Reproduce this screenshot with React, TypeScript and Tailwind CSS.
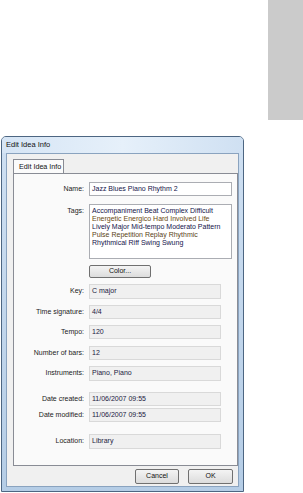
import React from "react";

const font = { fontFamily: '"Liberation Sans", Arial, sans-serif' };

function Row({ label, mt, children }: { label: string; mt: string; children: React.ReactNode }) {
  return (
    <div className={`flex items-start ${mt}`}>
      <div className="w-[71px] shrink-0 pr-[1px] text-right leading-[14px] text-[7px] text-[#1a1a1a]">{label}</div>
      <div className="ml-[4px] flex-1">{children}</div>
    </div>
  );
}

function RO({ value, mt, label, h = "h-[14px]" }: { value: string; mt: string; label: string; h?: string }) {
  return (
    <Row label={label} mt={mt}>
      <div className={`${h} w-[132px] border border-[#d9d9d9] bg-[#f0f0f0] pl-[2px] text-[7px] leading-[12px] text-[#1a1a40]`}>{value}</div>
    </Row>
  );
}

const btn =
  "flex items-center justify-center rounded-[2px] border border-[#707070] bg-gradient-to-b from-[#f4f4f4] to-[#dcdcdc] text-[7px] text-[#111]";

export default function App() {
  return (
    <div className="w-[303px] h-[493px] bg-white overflow-hidden" style={font}>
      <div className="flex justify-end">
        <div className="w-[35px] h-[120px] bg-[#cbcbcb]" />
      </div>
      <div className="mt-[16px] ml-[1px] w-[243px] h-[356px] rounded-t-[5px] border border-[#4d6682] bg-gradient-to-b from-[#cfe0f2] to-[#b5cde6] flex flex-col">
        <div className="h-[16px] shrink-0 bg-gradient-to-r from-[#d6e5f5] via-[#e6f0fa] to-[#cfe0f2] rounded-t-[4px] pl-[4px] text-[7.5px] leading-[16px] text-[#111]">
          Edit Idea Info
        </div>
        <div className="mx-[4px] mb-[4px] flex-1 border border-[#8aa3bf] bg-[#f0f0f0] pt-[5px] pl-[6px] pr-[0px] flex flex-col">
          <div className="flex">
            <div className="h-[14px] w-[51px] border border-b-0 border-[#898c95] bg-[#fbfbfb] pl-[5px] text-[7.2px] leading-[13px] text-[#111]">
              Edit Idea Info
            </div>
          </div>
          <div className="h-[293px] w-[225px] border border-[#898c95] bg-[#fafafa] flex flex-col">
            <Row label="Name:" mt="mt-[8px]">
              <div className="h-[14px] w-[143px] border border-[#abadb3] bg-white pl-[2px] text-[7px] leading-[12px] text-[#14144a]">
                Jazz Blues Piano Rhythm 2
              </div>
            </Row>
            <Row label="Tags:" mt="mt-[8px]">
              <div className="h-[55px] w-[143px] border border-[#abadb3] bg-white pl-[2px] pt-[2px] text-[7px] leading-[8px]">
                <div className="text-[#14144a]">Accompaniment Beat Complex Difficult</div>
                <div className="text-[#6a4810]">Energetic Energico Hard Involved Life</div>
                <div className="text-[#14144a]">Lively Major Mid-tempo Moderato Pattern</div>
                <div className="text-[#5a4418]">Pulse Repetition Replay Rhythmic</div>
                <div className="text-[#14144a]">Rhythmical Riff Swing Swung</div>
              </div>
            </Row>
            <div className="mt-[6px] ml-[75px]">
              <div className={`${btn} h-[13px] w-[62px]`}>Color...</div>
            </div>
            <RO label="Key:" value="C major" mt="mt-[6px]" h="h-[15px]" />
            <RO label="Time signature:" value="4/4" mt="mt-[6px]" />
            <RO label="Tempo:" value="120" mt="mt-[6px]" />
            <RO label="Number of bars:" value="12" mt="mt-[7px]" />
            <RO label="Instruments:" value="Piano, Piano" mt="mt-[6px]" h="h-[15px]" />
            <RO label="Date created:" value="11/06/2007 09:55" mt="mt-[11px]" />
            <RO label="Date modified:" value="11/06/2007 09:55" mt="mt-[2px]" />
            <RO label="Location:" value="Library" mt="mt-[12px]" h="h-[15px]" />
          </div>
          <div className="mt-[3px] flex justify-end gap-[9px] pr-[5px]">
            <div className={`${btn} h-[15px] w-[44px]`}>Cancel</div>
            <div className={`${btn} h-[15px] w-[45px]`}>OK</div>
          </div>
        </div>
      </div>
    </div>
  );
}
